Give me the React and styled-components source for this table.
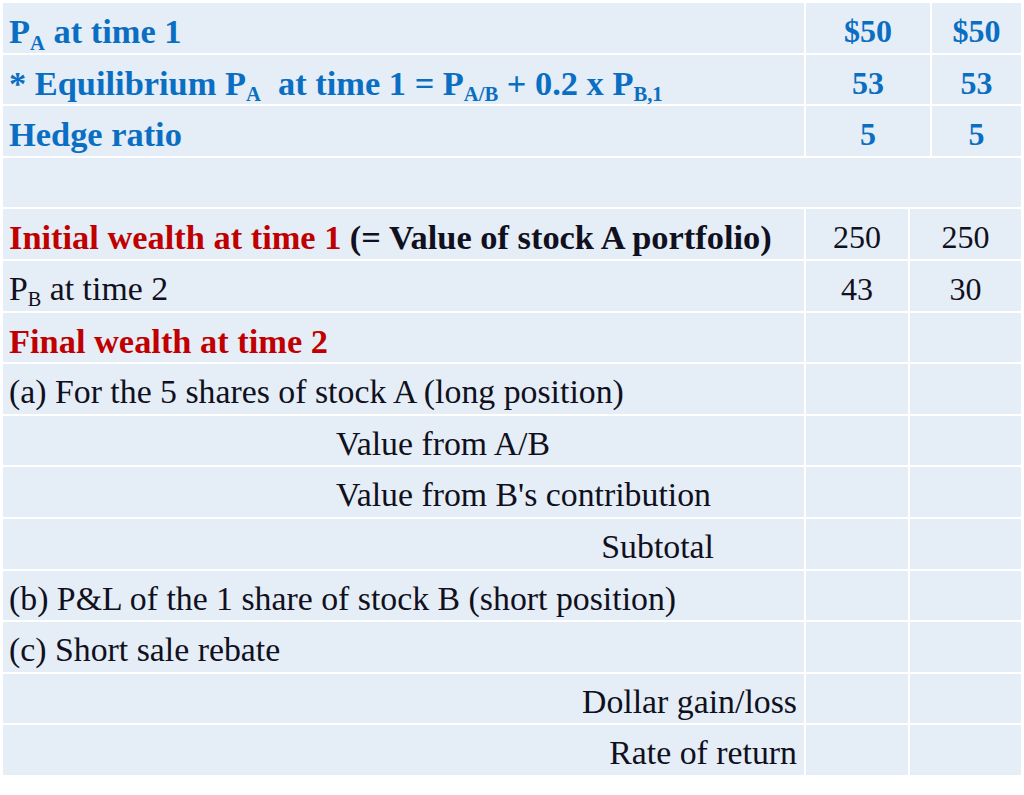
import React from 'react';
import styled, { createGlobalStyle } from 'styled-components';

const GlobalStyle = createGlobalStyle`
    html, body {
        margin: 0;
        padding: 0;
        background: #ffffff;
    }
    body {
        font-family: "Liberation Serif", "Times New Roman", serif;
    }
`;

const Page = styled.div`
    width: 1024px;
    height: 795px;
    padding: 3px 3px 0 3px;
    box-sizing: border-box;
`;

const Table = styled.div`
    display: flex;
    flex-direction: column;
    gap: 2px;
    width: 1018px;
`;

const Row = styled.div`
    display: grid;
    grid-template-columns: ${p => p.$cols || '801px 102px 1fr'};
    column-gap: 2px;
    height: 49.6px;
`;

const Cell = styled.div`
    background: #e5edf6;
    text-align: ${p => p.$center ? 'center' : p.$right ? 'right' : 'left'};
    padding: 8px ${p => p.$padRight || 6}px 0 ${p => p.$padLeft || 6}px;
    box-sizing: border-box;
    height: 49.6px;
    font-size: ${p => p.$num ? 32 : 33.8}px;
    line-height: 40px;
    white-space: pre;
    color: #101020;
    grid-column: ${p => p.$span ? '1 / -1' : 'auto'};
`;

const Blue = styled.span`
    color: #0a6fc2;
    font-weight: 700;
    font-size: ${p => p.$num ? '32px' : '34.4px'};
`;

const Red = styled.span`
    color: #c00000;
    font-weight: 700;
    font-size: 34.4px;
`;

const Dark = styled.span`
    color: #101020;
    font-weight: 700;
    font-size: 34.4px;
`;

const Sub = styled.span`
    font-size: 0.6em;
    position: relative;
    top: 0.32em;
    line-height: 0;
`;

const topCols = '801px 124px 1fr';

const emptyRow = (label, opts = {}) => (
    <Row>
        <Cell {...opts}>{label}</Cell>
        <Cell />
        <Cell />
    </Row>
);

const App = () => (
    <Page>
        <GlobalStyle />
        <Table>
            <Row $cols={topCols}>
                <Cell><Blue>P<Sub>A</Sub> at time 1</Blue></Cell>
                <Cell $center $num><Blue $num>$50</Blue></Cell>
                <Cell $center $num><Blue $num>$50</Blue></Cell>
            </Row>
            <Row $cols={topCols}>
                <Cell>
                    <Blue>* Equilibrium P<Sub>A</Sub>  at time 1 = P<Sub>A/B</Sub> + 0.2 x P<Sub>B,1</Sub></Blue>
                </Cell>
                <Cell $center $num><Blue $num>53</Blue></Cell>
                <Cell $center $num><Blue $num>53</Blue></Cell>
            </Row>
            <Row $cols={topCols}>
                <Cell><Blue>Hedge ratio</Blue></Cell>
                <Cell $center $num><Blue $num>5</Blue></Cell>
                <Cell $center $num><Blue $num>5</Blue></Cell>
            </Row>
            <Row>
                <Cell $span />
            </Row>
            <Row>
                <Cell><Red>Initial wealth at time 1</Red> <Dark>(= Value of stock A portfolio)</Dark></Cell>
                <Cell $center $num>250</Cell>
                <Cell $center $num>250</Cell>
            </Row>
            <Row>
                <Cell>P<Sub>B</Sub> at time 2</Cell>
                <Cell $center $num>43</Cell>
                <Cell $center $num>30</Cell>
            </Row>
            {emptyRow(<Red>Final wealth at time 2</Red>)}
            {emptyRow('(a) For the 5 shares of stock A (long position)')}
            {emptyRow('Value from A/B', { $padLeft: 333 })}
            {emptyRow("Value from B's contribution", { $padLeft: 333 })}
            {emptyRow('Subtotal', { $right: true, $padRight: 90 })}
            {emptyRow('(b) P&L of the 1 share of stock B (short position)')}
            {emptyRow('(c) Short sale rebate')}
            {emptyRow('Dollar gain/loss', { $right: true, $padRight: 7 })}
            {emptyRow('Rate of return', { $right: true, $padRight: 7 })}
        </Table>
    </Page>
);

export default App;
